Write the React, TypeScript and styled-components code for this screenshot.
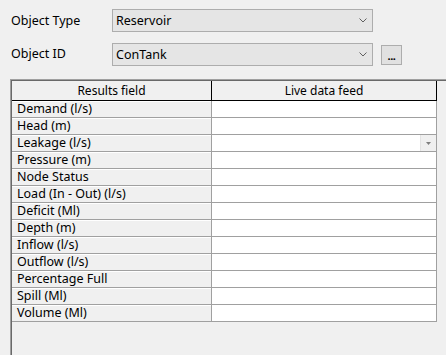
import React from "react";
import styled, { createGlobalStyle } from "styled-components";

const Global = createGlobalStyle`
  html, body { margin: 0; padding: 0; background: #f0f0f0; }
  body { font-family: "Noto Sans", "Open Sans", sans-serif; font-size: 12.5px; color: #000; }
  * { box-sizing: border-box; }
`;

const Page = styled.div`
  width: 446px;
  height: 355px;
  overflow: hidden;
  background: #f0f0f0;
  padding: 9px 0 0 10px;
  display: flex;
  flex-direction: column;
`;

const FieldRow = styled.div<{ $mt?: number }>`
  display: flex;
  align-items: center;
  margin-top: ${(p) => p.$mt ?? 0}px;
`;

const Label = styled.div<{ $dy?: number }>`
  width: 102px;
  padding-left: 1px;
  position: relative;
  top: ${(p) => p.$dy ?? 0}px;
  line-height: 16px;
`;

const Combo = styled.div`
  width: 261px;
  height: 23px;
  background: #e5e5e5;
  border: 1px solid #adadad;
  display: flex;
  align-items: center;
  justify-content: space-between;
  padding: 0 5px 0 3px;
  line-height: 16px;
`;

const DotsButton = styled.div`
  width: 21px;
  height: 20px;
  margin-left: 8px;
  margin-top: 1px;
  background: #e1e1e1;
  border: 1px solid #adadad;
  display: flex;
  align-items: flex-end;
  justify-content: center;
  font-size: 11px;
  font-weight: 700;
  line-height: 14px;
  letter-spacing: -0.5px;
  padding-bottom: 1px;
`;

const Frame = styled.div`
  margin-top: 13px;
  margin-right: -20px;
  height: 300px;
  border-top: 1px solid #a0a0a0;
  border-left: 1px solid #a0a0a0;
`;

const Inner = styled.div`
  height: 100%;
  border-top: 1px solid #696969;
  border-left: 1px solid #696969;
`;

const Grid = styled.div`
  display: grid;
  grid-template-columns: 200px 225px;
`;

const HeaderCell = styled.div`
  height: 20px;
  background: #f0f0f0;
  border-right: 1px solid #000;
  border-bottom: 1px solid #000;
  display: flex;
  align-items: center;
  justify-content: center;
  font-size: 12px;
  line-height: 16px;
`;

const NameCell = styled.div`
  height: 17px;
  background: #f0f0f0;
  border-right: 1px solid #a0a0a0;
  border-bottom: 1px solid #a0a0a0;
  box-shadow: inset 0 1px 0 #ffffff;
  padding-left: 5px;
  display: flex;
  align-items: center;
  line-height: 16px;
  white-space: nowrap;
`;

const ValueCell = styled.div`
  height: 17px;
  background: #fff;
  border-right: 1px solid #a0a0a0;
  border-bottom: 1px solid #a0a0a0;
  display: flex;
  justify-content: flex-end;
`;

const DropButton = styled.div`
  width: 16px;
  height: 16px;
  background: #f0f0f0;
  border-left: 1px solid #e3e3e3;
  display: flex;
  align-items: center;
  justify-content: center;
`;

const Chevron = () => (
  <svg width="8" height="5" viewBox="0 0 8 5">
    <path d="M0.5 0.5 L4 4 L7.5 0.5" fill="none" stroke="#606060" strokeWidth="1" />
  </svg>
);

const SmallArrow = () => (
  <svg width="5" height="3" viewBox="0 0 5 3">
    <path d="M0 0 H5 L2.5 3 Z" fill="#7f7f7f" />
  </svg>
);

const fields = [
  "Demand (l/s)",
  "Head (m)",
  "Leakage (l/s)",
  "Pressure (m)",
  "Node Status",
  "Load (In - Out) (l/s)",
  "Deficit (Ml)",
  "Depth (m)",
  "Inflow (l/s)",
  "Outflow (l/s)",
  "Percentage Full",
  "Spill (Ml)",
  "Volume (Ml)",
];

export default function App() {
  return (
    <>
      <Global />
      <Page>
        <FieldRow>
          <Label>Object Type</Label>
          <Combo>
            <span>Reservoir</span>
            <Chevron />
          </Combo>
        </FieldRow>
        <FieldRow $mt={11}>
          <Label $dy={-1}>Object ID</Label>
          <Combo>
            <span>ConTank</span>
            <Chevron />
          </Combo>
          <DotsButton>...</DotsButton>
        </FieldRow>
        <Frame>
          <Inner>
            <Grid>
              <HeaderCell>Results field</HeaderCell>
              <HeaderCell>Live data feed</HeaderCell>
              {fields.map((f, i) => (
                <React.Fragment key={f}>
                  <NameCell>{f}</NameCell>
                  <ValueCell>
                    {i === 2 && (
                      <DropButton>
                        <SmallArrow />
                      </DropButton>
                    )}
                  </ValueCell>
                </React.Fragment>
              ))}
            </Grid>
          </Inner>
        </Frame>
      </Page>
    </>
  );
}
